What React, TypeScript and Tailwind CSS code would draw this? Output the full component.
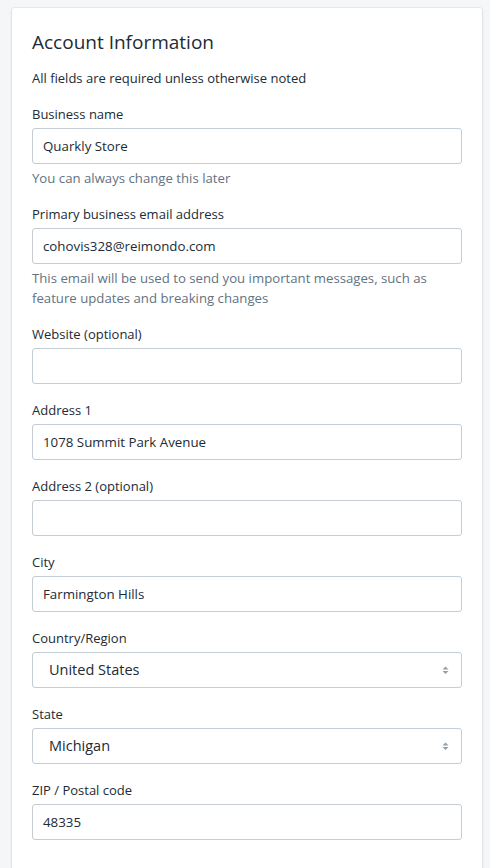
import React from "react";

const fieldCls =
  "h-9 w-full rounded-[3px] border border-[#c4cdd5] bg-white px-[10px] text-[13.3px] text-[#212b36] outline-none";

const Label = ({ children }: { children: React.ReactNode }) => (
  <div className="mb-1 text-[13px] leading-5 text-[#212b36]">{children}</div>
);

const Help = ({ children }: { children: React.ReactNode }) => (
  <div className="mt-1 text-[13.2px] leading-5 text-[#637381]">{children}</div>
);

const TextField = ({
  label,
  value,
  help,
}: {
  label: string;
  value?: string;
  help?: string;
}) => (
  <div>
    <Label>{label}</Label>
    <input className={fieldCls} defaultValue={value ?? ""} />
    {help && <Help>{help}</Help>}
  </div>
);

const SelectField = ({ label, value }: { label: string; value: string }) => (
  <div>
    <Label>{label}</Label>
    <div className="relative flex h-9 w-full items-center rounded-[3px] border border-[#c4cdd5] bg-white pl-4 text-[14.5px] text-[#212b36]">
      {value}
      <svg
        className="absolute right-[12px] top-1/2 -translate-y-1/2"
        width="7"
        height="11"
        viewBox="0 0 7 11"
      >
        <path d="M3.5 2 L6.5 5 H0.5 Z" fill="#919eab" />
        <path d="M3.5 9.5 L6.5 6.5 H0.5 Z" fill="#919eab" />
      </svg>
    </div>
  </div>
);

export default function App() {
  return (
    <div
      className="min-h-[868px] bg-[#f4f6f8] pl-3 pr-2 pt-2"
      style={{ fontFamily: '"Segoe UI", "Open Sans", sans-serif' }}
    >
      <div className="h-[860px] rounded-t-[3px] bg-white px-5 pt-5 shadow-[0_0_0_1px_rgba(63,63,68,0.05),0_1px_3px_0_rgba(63,63,68,0.15)]">
        <h2 className="text-[19px] leading-7 text-[#212b36]">Account Information</h2>
        <p className="mt-3 text-[13px] leading-5 text-[#212b36]">
          All fields are required unless otherwise noted
        </p>
        <div className="mt-4 flex flex-col gap-4">
          <TextField
            label="Business name"
            value="Quarkly Store"
            help="You can always change this later"
          />
          <TextField
            label="Primary business email address"
            value="cohovis328@reimondo.com"
            help="This email will be used to send you important messages, such as feature updates and breaking changes"
          />
          <TextField label="Website (optional)" />
          <TextField label="Address 1" value="1078 Summit Park Avenue" />
          <TextField label="Address 2 (optional)" />
          <TextField label="City" value="Farmington Hills" />
          <SelectField label="Country/Region" value="United States" />
          <SelectField label="State" value="Michigan" />
          <TextField label="ZIP / Postal code" value="48335" />
        </div>
      </div>
    </div>
  );
}
